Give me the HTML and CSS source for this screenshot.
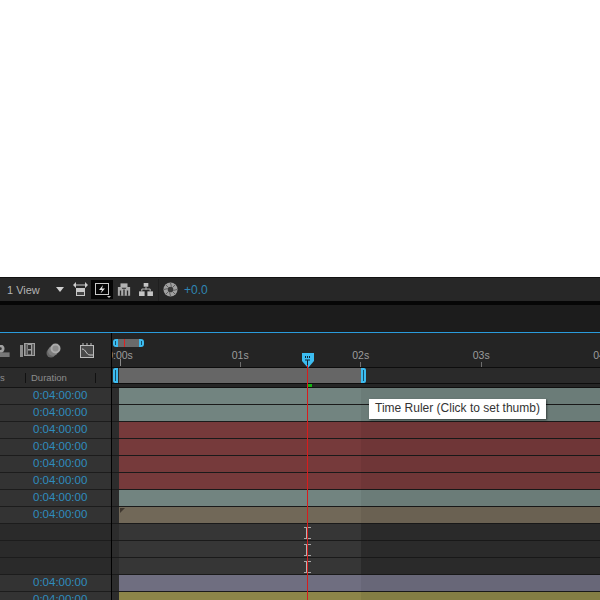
FILE: index.html
```html
<!DOCTYPE html>
<html lang="en">
<head>
<meta charset="UTF-8" />
<title>Timeline</title>
<link rel="stylesheet" href="styles.css">
</head>
<body>
  <div class="blank"></div>

  <div class="toolbar">
    <span class="view-label">1 View</span>
    <span class="view-arrow"></span>
    <svg class="tool" width="15" height="16" viewBox="0 0 15 16">
      <path d="M1 3h13" stroke="#ccc"/>
      <path d="M0 3l3-3v6zM15 3l-3-3v6z" fill="#ccc"/>
      <rect x="3" y="6" width="9" height="3" fill="#c8c8c8"/>
      <rect x="3.500" y="9.500" width="8" height="4" fill="#444" stroke="#c8c8c8"/>
    </svg>
    <span class="tool-active">
      <svg width="18" height="16" viewBox="0 0 18 16">
        <rect x="1.500" y="1.500" width="13" height="11" fill="none" stroke="#c8c8c8"/>
        <path d="M9 3L5 8h3L6.500 11.500 11 6.500H8z" fill="#e0e0e0"/>
        <path d="M13 14h4l-2 2z" fill="#ccc"/>
      </svg>
    </span>
    <svg class="tool" width="14" height="13" viewBox="0 0 16 14">
      <path d="M1 4h4l1 2h4l1-2h4v10H1z" fill="#aaa"/>
      <path d="M4 0h8v5H4z" fill="#b4b4b4"/>
      <path d="M4 8v6M8 7v7M12 8v6" stroke="#2a2a2a" stroke-width="1.500"/>
    </svg>
    <svg class="tool tool-tree" width="14" height="13" viewBox="0 0 15 14">
      <rect x="5" y="0" width="5" height="4" fill="#c4c4c4"/>
      <rect x="0" y="9" width="6" height="5" fill="#c4c4c4"/>
      <rect x="9" y="9" width="6" height="5" fill="#c4c4c4"/>
      <path d="M7.500 4v3M3 9V6.500h9V9" fill="none" stroke="#c4c4c4"/>
    </svg>
    <span class="tool-sep"></span>
    <svg class="tool" width="15" height="15" viewBox="0 0 16 16">
      <circle cx="8" cy="8" r="7.500" fill="#a0a0a0"/>
      <circle cx="8" cy="8" r="3" fill="#3a3a3a"/>
      <path d="M8 1L9 5M15 8l-4 1M8 15l-1-4M1 8l4-1M3 3l3 3M13 3l-3 3M13 13l-3-3M3 13l3-3" stroke="#5a5a5a"/>
    </svg>
    <span class="exposure">+0.0</span>
  </div>

  <div class="gap-line"></div>
  <div class="strip"></div>

  <div class="panel">
    <div class="left">
      <div class="switches">
        <svg class="sw-motion" width="10" height="12" viewBox="2 1 10 13">
          <circle cx="2" cy="5" r="4.500" fill="#a0a0a0"/>
          <circle cx="2" cy="5" r="1.500" fill="#333"/>
          <rect x="0" y="9" width="12" height="5" fill="#777"/>
        </svg>
        <svg class="sw-film" width="15" height="15" viewBox="0 0 15 15">
          <rect x="0" y="2" width="3" height="12" fill="#8e8e8e"/>
          <rect x="4" y="0" width="11" height="13" fill="#a0a0a0"/>
          <path d="M5.500 1h2v11h-2zM12 1h2v11h-2z" fill="#2e2e2e" opacity=".6"/>
          <rect x="8" y="2" width="3" height="4" fill="#333"/>
          <rect x="8" y="7.500" width="3" height="4" fill="#333"/>
        </svg>
        <svg class="sw-blur" width="15" height="15" viewBox="0 0 15 15">
          <circle cx="5" cy="10" r="4.500" fill="#666"/>
          <circle cx="7" cy="8" r="5" fill="#7d7d7d"/>
          <circle cx="9.500" cy="5.500" r="5" fill="#ababab"/>
          <circle cx="9.500" cy="5.500" r="3" fill="#8d8d8d"/>
        </svg>
        <svg class="sw-graph" width="16" height="15" viewBox="0 0 16 15">
          <rect x="1.500" y="2.500" width="13" height="12" fill="#4a4a4a" stroke="#bcbcbc"/>
          <path d="M4 0v3M8 0v3M12 0v3" stroke="#bcbcbc"/>
          <path d="M3 6c4 0 4 6 8 6h3" fill="none" stroke="#ccc"/>
        </svg>
      </div>
      <div class="col-head">
        <span class="col-in">s</span>
        <span class="col-duration">Duration</span>
      </div>
      <div class="layer"><span>0:04:00:00</span></div>
      <div class="layer"><span>0:04:00:00</span></div>
      <div class="layer"><span>0:04:00:00</span></div>
      <div class="layer"><span>0:04:00:00</span></div>
      <div class="layer"><span>0:04:00:00</span></div>
      <div class="layer"><span>0:04:00:00</span></div>
      <div class="layer"><span>0:04:00:00</span></div>
      <div class="layer"><span>0:04:00:00</span></div>
      <div class="layer empty"></div>
      <div class="layer empty"></div>
      <div class="layer empty"></div>
      <div class="layer"><span>0:04:00:00</span></div>
      <div class="layer"><span>0:04:00:00</span></div>
    </div>

    <div class="right">
      <div class="ruler">
        <div class="nav">
          <span class="nav-cap"></span>
          <span class="nav-track"><i></i></span>
          <span class="nav-cap end"></span>
        </div>
        <div class="marks">
          <div class="mark first"><span>0:00s</span><i></i></div>
          <div class="mark"><span>01s</span><i></i></div>
          <div class="mark"><span>02s</span><i></i></div>
          <div class="mark"><span>03s</span><i class="long"></i></div>
          <div class="mark"><span>04s</span><i></i></div>
        </div>
      </div>
      <div class="work-row">
        <span class="work-cap"></span>
        <span class="work-bar"></span>
        <span class="work-cap end"></span>
      </div>
      <div class="render-row"></div>
      <div class="track"><div class="clip teal"></div></div>
      <div class="track"><div class="clip teal"></div></div>
      <div class="track"><div class="clip red"></div></div>
      <div class="track"><div class="clip red"></div></div>
      <div class="track"><div class="clip red"></div></div>
      <div class="track"><div class="clip red"></div></div>
      <div class="track"><div class="clip teal"></div></div>
      <div class="track"><div class="clip tan"><b></b></div></div>
      <div class="track"><div class="clip dark"></div></div>
      <div class="track"><div class="clip dark"></div></div>
      <div class="track"><div class="clip dark"></div></div>
      <div class="track"><div class="clip purple"></div></div>
      <div class="track"><div class="clip olive"></div></div>

      <div class="outside"></div>
      <div class="green-mark"></div>
      <div class="playhead">
        <svg class="thumb" width="12" height="15" viewBox="0 0 12 15">
          <path d="M0 0h12v8l-6 7-6-7z" fill="#3cbcf0"/>
          <path d="M3.500 3v2M5.500 3v2M7.500 3v2M3 7h5M5.500 7v6" stroke="#123" stroke-width="1"/>
        </svg>
        <span class="cursor c1"></span>
        <span class="cursor c2"></span>
        <span class="cursor c3"></span>
        <i class="line"></i>
      </div>
      <div class="tooltip">Time Ruler (Click to set thumb)</div>
    </div>
  </div>
</body>
</html>
```

FILE: styles.css
```css
* {
  box-sizing: border-box;
}

html, body {
  height: 100%;
  margin: 0;
  overflow: hidden;
  background: #fff;
  font-family: "Liberation Sans", Arial, sans-serif;
  font-size: 11px;
}

.blank {
  height: 277px;
}

/* top bar */
.toolbar {
  height: 24px;
  display: flex;
  align-items: center;
  background: #272727;
  border-top: 1px solid #111;
  color: #b4b4b4;
}

.view-label {
  margin-left: 7px;
  width: 49px;
}

.view-arrow {
  width: 0;
  height: 0;
  border-left: 4.500px solid transparent;
  border-right: 4.500px solid transparent;
  border-top: 5px solid #d0d0d0;
  margin-right: 9px;
}

.tool {
  flex: none;
}

.tool-active {
  width: 22px;
  height: 19px;
  margin: 0 4px 0 3px;
  padding: 2px 0 0 3px;
  background: #050505;
  display: flex;
}

.tool-tree {
  margin-left: 8px;
}

.tool-sep {
  width: 1px;
  height: 22px;
  margin: 0 4px 0 5px;
  background: #1f1f1f;
}

.exposure {
  margin-left: 6px;
  color: #2f86b5;
  font-size: 12px;
}

.gap-line {
  height: 4px;
  background: #060606;
}

.strip {
  height: 28px;
  background: #1c1c1c;
  border-bottom: 1px solid #2a9bdc;
}

/* panel */
.panel {
  display: flex;
  background: #232323;
}

.left {
  width: 112px;
  flex: none;
  border-right: 1px solid #000;
  background: #2a2a2a;
}

.switches {
  height: 35px;
  display: flex;
  align-items: flex-start;
  padding-top: 10px;
  border-bottom: 1px solid #141414;
  background: #262626;
}

.sw-motion {
  margin-top: 2px;
}

.sw-film {
  margin-left: 10px;
}

.sw-blur {
  margin-left: 11px;
}

.sw-graph {
  margin-left: 18px;
}

.col-head {
  height: 20px;
  display: flex;
  align-items: center;
  border-bottom: 1px solid #141414;
  background: #2b2b2b;
  color: #8d8d8d;
  font-size: 9.500px;
  line-height: 10px;
}

.col-in {
  width: 26px;
  border-right: 1px solid #111;
}

.col-duration {
  width: 70px;
  padding-left: 5px;
  border-right: 1px solid #111;
}

.layer {
  height: 17px;
  padding-left: 33px;
  line-height: 14px;
  background: #333;
  border-bottom: 1px solid #1c1c1c;
  color: #2f8cbe;
  font-size: 11.500px;
}

.layer.empty {
  background: #2a2a2a;
}

.right {
  flex: 1;
  min-width: 0;
  position: relative;
}

.ruler {
  height: 34px;
  background: #242424;
  overflow: hidden;
}

.nav {
  display: flex;
  height: 8px;
  margin: 6px 0 0 1px;
}

.nav-cap {
  width: 5px;
  background: #3cbcf0;
  border-radius: 3px 0 0 3px;
  display: flex;
  justify-content: center;
}

.nav-cap.end {
  border-radius: 0 3px 3px 0;
}

.nav-cap::after {
  content: "";
  width: 1px;
  height: 4px;
  margin-top: 2px;
  background: #14506b;
}

.nav-track {
  width: 21px;
  background: #6a6a6a;
  display: flex;
}

.nav-track i {
  width: 1px;
  height: 8px;
  margin-left: 6px;
  background: #e02020;
}

.marks {
  display: flex;
  margin-left: 8px;
  margin-top: 3px;
}

.mark {
  width: 120.500px;
  flex: none;
  display: flex;
  flex-direction: column;
  align-items: center;
  color: #9c9c9c;
  font-size: 10.500px;
  line-height: 11px;
}

.mark.first {
  width: 0;
  margin-right: 60px;
}

.mark i {
  width: 1px;
  height: 5px;
  margin-top: 1px;
  background: #6e6e6e;
}

.mark.first i {
  height: 7px;
  margin-top: -2px;
  background: #8a8a8a;
}

.mark i.long {
  height: 12px;
}

.work-row {
  height: 17px;
  display: flex;
  background: #2a2a2a;
  border-top: 1px solid #0d0d0d;
  border-bottom: 1px solid #0d0d0d;
}

.work-cap {
  width: 5px;
  height: 15px;
  margin-left: 1px;
  background: #3cbcf0;
  border-radius: 2px 0 0 2px;
  display: flex;
  justify-content: center;
}

.work-cap.end {
  margin-left: 0;
  border-radius: 0 2px 2px 0;
}

.work-cap::after {
  content: "";
  width: 1px;
  height: 11px;
  margin-top: 2px;
  background: #14506b;
}

.work-bar {
  width: 242px;
  margin-left: 1px;
  background: #666;
}

.render-row {
  height: 4px;
  background: #252525;
  border-bottom: 1px solid #0f0f0f;
}

.track {
  height: 17px;
  padding-left: 7px;
  background: #2c2c2c;
  border-bottom: 1px solid #1a1a1a;
}

.clip {
  height: 16px;
  position: relative;
}

.teal {
  background: #728480;
}

.red {
  background: #763a3b;
}

.tan {
  background: #716858;
}

.tan b {
  position: absolute;
  left: 1px;
  top: 1px;
  width: 0;
  height: 0;
  border-top: 5px solid #3e362e;
  border-right: 5px solid transparent;
}

.dark {
  background: linear-gradient(90deg, #363636 242px, #2d2d2d 242px);
}

.purple {
  background: #6f6e80;
}

.olive {
  background: #8c8549;
}

/* past the work area everything is dimmed */
.outside {
  position: absolute;
  left: 249px;
  right: 0;
  top: 55px;
  bottom: 0;
  background: rgba(0, 0, 0, 0.06);
}

.green-mark {
  position: absolute;
  left: 196px;
  top: 51px;
  width: 4px;
  height: 3px;
  background: #12b412;
}

.playhead {
  position: absolute;
  left: 195px;
  top: 0;
  bottom: 0;
  width: 0;
}

.thumb {
  position: absolute;
  left: -5px;
  top: 20px;
}

.line {
  position: absolute;
  left: 0;
  top: 32px;
  bottom: 0;
  width: 1px;
  background: #d81c1c;
}

.cursor {
  position: absolute;
  left: -3px;
  width: 7px;
  height: 12px;
  border-top: 1px solid #a8a8a8;
  border-bottom: 1px solid #a8a8a8;
}

.cursor::after {
  content: "";
  display: block;
  width: 2px;
  height: 10px;
  margin-left: 2px;
  background: #b4b4b4;
}

.c1 {
  top: 194px;
}

.c2 {
  top: 211px;
}

.c3 {
  top: 228px;
}

.tooltip {
  position: absolute;
  left: 257px;
  top: 66px;
  height: 20px;
  padding: 0 6px;
  line-height: 19px;
  background: #fff;
  color: #333;
  font-size: 12px;
  white-space: nowrap;
  box-shadow: 1px 1px 2px rgba(0, 0, 0, 0.5);
}
```
